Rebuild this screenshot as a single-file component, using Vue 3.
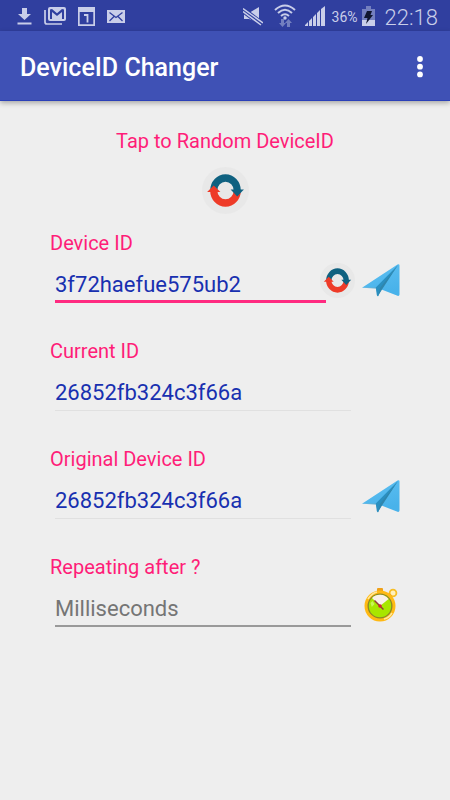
<script setup>
import { ref } from 'vue'

const deviceId = ref('3f72haefue575ub2')
const originalId = '26852fb324c3f66a'
const currentId = ref(originalId)
const delay = ref('')

const randomize = () => {
  deviceId.value = Array.from({ length: 16 }, () => Math.floor(Math.random() * 16).toString(16)).join('')
}
const apply = (id) => {
  currentId.value = id
}
</script>

<template>
  <svg class="defs" width="0" height="0" aria-hidden="true">
    <defs>
      <linearGradient id="sky" x1="0" y1="0" x2="0.4" y2="1">
        <stop offset="0" stop-color="#5fc0f2" />
        <stop offset="1" stop-color="#48b2ea" />
      </linearGradient>
    </defs>
    <symbol id="refresh" viewBox="0 0 46 46">
      <circle cx="23" cy="23" r="23" fill="#e8e8e8" />
      <path d="M8 23a15 16 0 0 0 30 0h-7a8 8.500 0 0 1-16 0z" fill="#ee3b28" />
      <path d="M8 23a15 16 0 0 1 30 0h-7a8 8.500 0 0 0-16 0z" fill="#0f6180" />
      <path d="M5 24.500 11.500 18 18 24.500z" fill="#ee3b28" />
      <path d="M28 22h13l-6.500 6.800z" fill="#0f6180" />
    </symbol>
    <symbol id="plane" viewBox="0 0 38 33">
      <path d="M0 23.700 35.500.500Q37.500-.200 37.500 1.600V30.500Q37.300 32.300 35.500 31.800L19.500 25.500 16 32 13.800 23.700z" fill="url(#sky)" />
      <path d="M13.800 23.500 36 1 18.500 24.800 16.300 32Q15.500 33 14.800 31z" fill="#2a8fc0" />
      <path d="M18 24 36 1 20 25.400 16 32z" fill="#2f86ad" />
      <path d="M0 23.700 14 23.400 14.500 24.500z" fill="#3a9cca" />
    </symbol>
    <symbol id="watch" viewBox="0 0 36 36">
      <rect x="13" y="1" width="6" height="5" rx="1" fill="#efa017" />
      <circle cx="29" cy="6" r="3.400" fill="#fff0bb" stroke="#f7be25" stroke-width="1.800" />
      <path d="m23.500 9 2-2.800 2.500 2-2.300 2.800z" fill="#efa017" />
      <circle cx="16" cy="19" r="14" fill="#8b8728" stroke="#ffb914" stroke-width="3" />
      <circle cx="16" cy="19" r="11.200" fill="#a8e600" />
      <path d="M16 19 8 11a11.200 11.200 0 0 1 16.600 1z" fill="#f9f0e9" />
      <path d="M4 12q4-6 9-7M28 26q-3 5-8 6" fill="none" stroke="#ffe79b" stroke-width="1.500" />
      <path d="m6.500 16 2-2 2 3-2.700 3z" fill="#e0ff91" opacity=".6" />
      <path d="m10.500 13.500 9 9" stroke="#934034" stroke-width="1.500" />
      <circle cx="16" cy="19" r="1.800" fill="#cf2434" />
    </symbol>
  </svg>

  <div class="screen">
    <div class="status">
      <div class="notices">
        <svg width="15" height="17" viewBox="0 0 15 17"><path d="M5 0h5v6h4L7.500 12 1 6h4zM.5 14.500h14v2H.5z" /></svg>
        <svg width="22" height="18" viewBox="0 0 22 18">
          <path d="M1 3v12q0 2 2 2h15" fill="none" stroke="#c9cee9" stroke-width="1.700" />
          <path fill-rule="evenodd" d="M6 0h14q2 0 2 2v10q0 2-2 2H6q-2 0-2-2V2q0-2 2-2zM6 2.500V12h2V5l5 4 5-4v7h2V2.500L18 2l-5 4.200L8 2z" />
        </svg>
        <svg width="17" height="19" viewBox="0 0 17 19">
          <path fill-rule="evenodd" d="M0 0h17v19H0zM1.700 5v12.300h13.600V5z" />
          <path d="M6 8H9.500V15.500" fill="none" stroke="#c9cee9" stroke-width="1.800" />
        </svg>
        <svg width="18" height="13" viewBox="0 0 18 13">
          <path d="M0 0h18v13H0z" />
          <path d="m2.500 2.500 6.500 5 6.500-5M2.500 11 7 6.500M15.500 11 11 6.500" fill="none" stroke="#303f9f" stroke-width="1.300" />
        </svg>
      </div>
      <div class="system">
        <svg width="20" height="20" viewBox="0 0 20 20">
          <path d="M1 7h5l10-6v16L6 13H1z" />
          <path d="m0 4 20 15" stroke="#303f9f" stroke-width="6" />
          <path d="m0 2.500 20 14.500M0 5.500l18 13.500" stroke="#c9cee9" stroke-width="1.500" />
        </svg>
        <svg class="wifi" width="22" height="23" viewBox="0 0 22 23">
          <path d="M1 6q10-9 20 0M4 9q7-6.500 14 0M7 12q4-3.500 8 0" fill="none" stroke="#c9cee9" stroke-width="2" />
          <circle cx="11" cy="14" r="1.700" />
          <path d="M7 15h3v4h2l-3.500 4L5 19h2zM13 23v-4h-2l3.500-4 3.500 4h-2v4z" fill="#7480bf" />
        </svg>
        <svg class="signal" width="20" height="20" viewBox="0 0 20 20"><path d="M0 20v-1l3-3v4zM4 20v-5l3-3v8zM8 20v-9l3-3v12zM12 20V7l3-3v16zM16 20V3l4-3v20z" /></svg>
        <span class="percent">36%</span>
        <svg width="13" height="20" viewBox="0 0 13 20">
          <path d="M4 0h5v3h4v11H0V3h4z" fill="#7480bf" />
          <path d="M0 14h13v6H0z" />
          <path d="M5 5h5L8.500 9H11l-7 9 1.500-6H2z" fill="#10162e" />
        </svg>
        <span class="time">22:18</span>
      </div>
    </div>

    <header class="bar">
      <h1>DeviceID Changer</h1>
      <button class="more" type="button" aria-label="More options">
        <svg width="6" height="22" viewBox="0 0 6 22"><circle cx="3" cy="3" r="2.900" /><circle cx="3" cy="10.700" r="2.900" /><circle cx="3" cy="18.400" r="2.900" /></svg>
      </button>
    </header>

    <main>
      <div class="tap">
        <p>Tap to Random DeviceID</p>
        <button type="button" aria-label="Random DeviceID" @click="randomize"><svg width="47" height="47"><use href="#refresh" /></svg></button>
      </div>

      <form @submit.prevent>
        <div class="group">
          <label for="device">Device ID</label>
          <div class="row">
            <input id="device" v-model="deviceId" class="active" type="text" spellcheck="false">
            <button class="shuffle" type="button" aria-label="Randomize" @click="randomize"><svg width="35" height="35"><use href="#refresh" /></svg></button>
            <button class="action" type="button" aria-label="Apply device ID" @click="apply(deviceId)"><svg width="38" height="33"><use href="#plane" /></svg></button>
          </div>
        </div>
        <div class="group">
          <label for="current">Current ID</label>
          <div class="row">
            <input id="current" :value="currentId" class="plain" type="text" readonly>
            <span class="action"></span>
          </div>
        </div>
        <div class="group">
          <label for="original">Original Device ID</label>
          <div class="row">
            <input id="original" :value="originalId" class="plain" type="text" readonly>
            <button class="action" type="button" aria-label="Restore original ID" @click="apply(originalId)"><svg width="38" height="33"><use href="#plane" /></svg></button>
          </div>
        </div>
        <div class="group">
          <label for="delay">Repeating after ?</label>
          <div class="row">
            <input id="delay" v-model="delay" type="text" inputmode="numeric" placeholder="Milliseconds">
            <button class="action" type="button" aria-label="Start timer"><svg width="36" height="36"><use href="#watch" /></svg></button>
          </div>
        </div>
      </form>
    </main>
  </div>
</template>

<style>
body {
  margin: 0;
  background: #eeeeee;
}
</style>

<style scoped>
.screen {
  min-height: 100vh;
  background: #eeeeee;
  font-family: Roboto, "Liberation Sans", sans-serif;
}
.defs {
  position: absolute;
}
svg {
  display: block;
  flex: none;
}
button {
  padding: 0;
  border: 0;
  background: none;
  cursor: pointer;
}
.status {
  display: flex;
  justify-content: space-between;
  height: 31px;
  padding: 0 12px 0 17px;
  background: #303f9f;
  color: #c9cee9;
  fill: #c9cee9;
}
.notices,
.system {
  display: flex;
  align-items: center;
}
.notices {
  gap: 12px;
  padding-top: 1px;
}
.percent {
  margin: 2px 4px 0 7px;
  font-size: 14px;
}
.time {
  margin-left: 10px;
  padding-top: 3px;
  font-size: 22px;
  font-weight: 300;
}
.wifi {
  margin-left: 11px;
}
.signal {
  margin-left: 9px;
}
.bar {
  display: flex;
  align-items: center;
  justify-content: space-between;
  box-sizing: border-box;
  height: 70px;
  padding: 3px 20px 0;
  border-bottom: 1px solid #2b40b8;
  background: #3f51b5;
  box-shadow: 0 2px 5px rgba(0, 0, 0, 0.3);
  color: #ffffff;
}
h1 {
  margin: 0;
  font-size: 25px;
  font-weight: 500;
}
.more {
  display: flex;
  align-items: center;
  justify-content: center;
  width: 20px;
  height: 40px;
  fill: #ffffff;
}
main {
  padding: 27px 50px 0;
}
.tap {
  display: flex;
  flex-direction: column;
  align-items: center;
  gap: 13px;
}
p,
label {
  margin: 0;
  color: #ff1d78;
  font-size: 20px;
  line-height: 26px;
}
form {
  display: flex;
  flex-direction: column;
  gap: 35px;
  margin-top: 16px;
}
.group {
  display: flex;
  flex-direction: column;
  gap: 2px;
}
.row {
  display: flex;
  align-items: center;
  height: 45px;
  padding-left: 5px;
}
input {
  flex: 1;
  align-self: flex-end;
  box-sizing: border-box;
  min-width: 0;
  height: 35px;
  padding: 0;
  border: 0;
  border-bottom: 2px solid #999999;
  border-radius: 0;
  outline: 0;
  background: none;
  color: #1830b0;
  font-family: inherit;
  font-size: 22px;
}
input::placeholder {
  color: #757575;
  opacity: 1;
}
.active {
  border-bottom: 3px solid #ff2a80;
}
.plain {
  height: 36px;
  border-bottom: 1px solid #e0e0e0;
}
.shuffle {
  margin: 0 -4px 0 -6px;
}
.action {
  display: flex;
  justify-content: flex-end;
  width: 49px;
}
</style>
